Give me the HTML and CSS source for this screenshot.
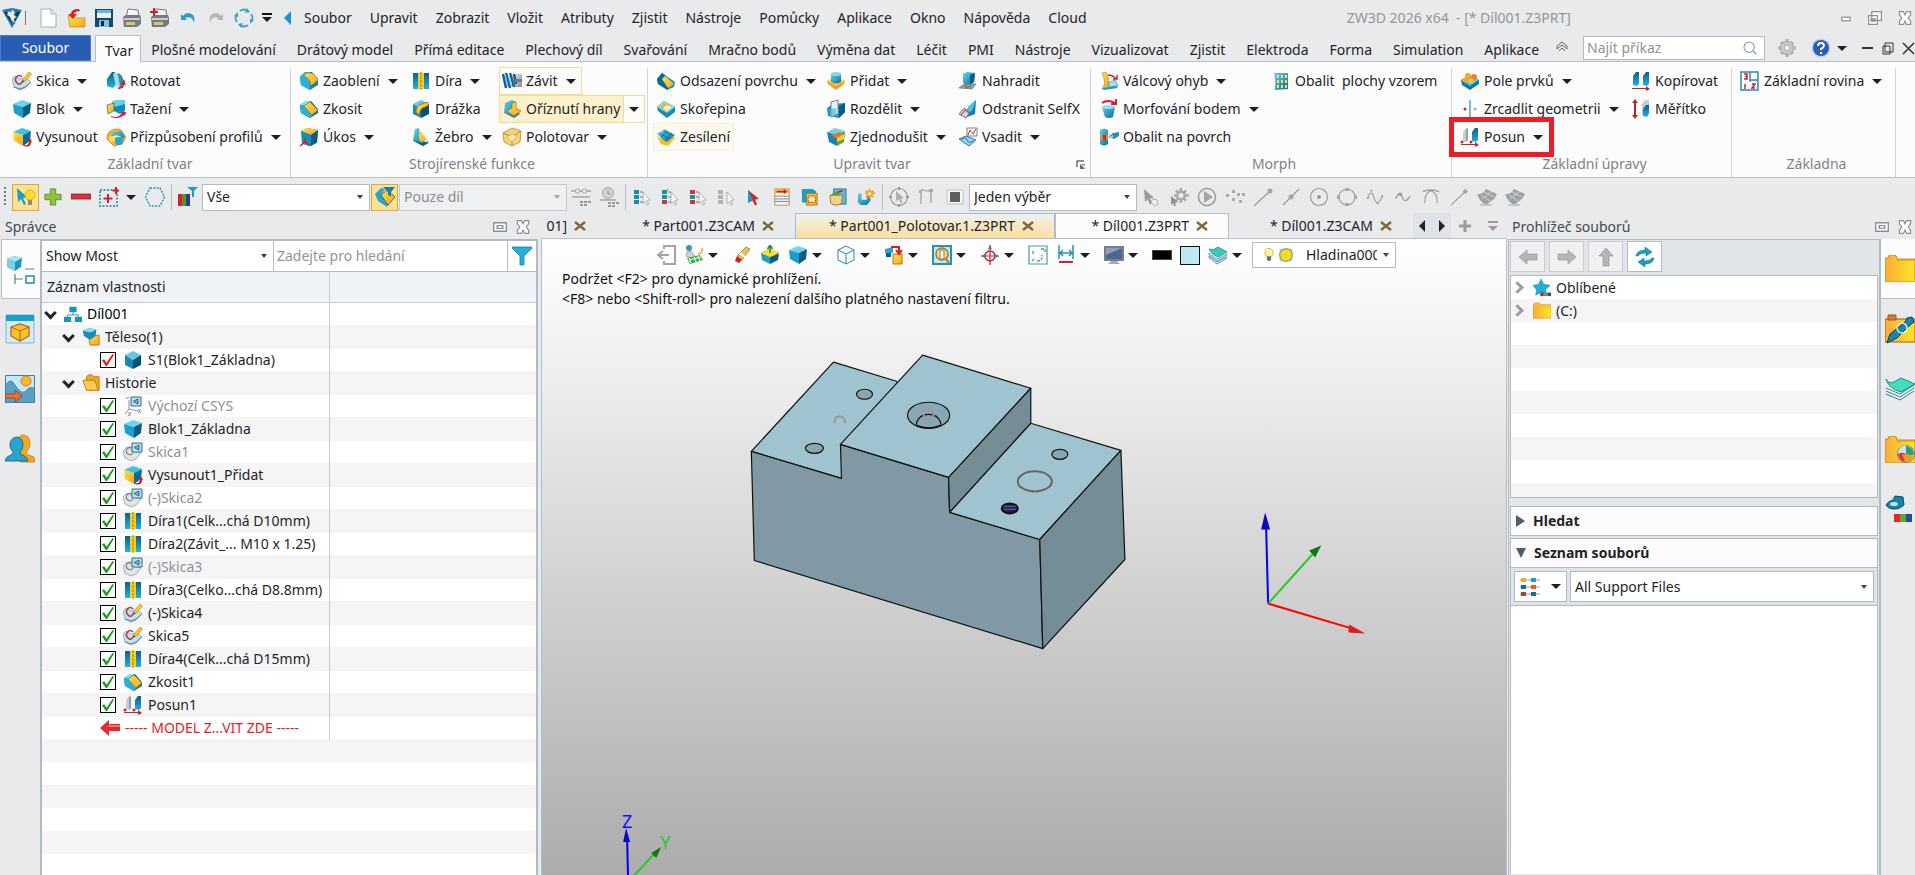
FILE: index.html
```html
<!DOCTYPE html>
<html lang="cs">
<head>
<meta charset="utf-8">
<title>ZW3D 2026 x64 - [* Díl001.Z3PRT]</title>
<link rel="stylesheet" href="styles.css">
</head>
<body>
<svg class="sprite" aria-hidden="true">
<defs>
<linearGradient id="gB" x1="0" y1="0" x2="1" y2="1"><stop offset="0" stop-color="#5fd2ee"/><stop offset="1" stop-color="#0a6f9e"/></linearGradient>
<linearGradient id="gD" x1="0" y1="0" x2="0" y2="1"><stop offset="0" stop-color="#0d5f86"/><stop offset="1" stop-color="#22b4dc"/></linearGradient>
<linearGradient id="gY" x1="0" y1="0" x2="1" y2="1"><stop offset="0" stop-color="#ffe04a"/><stop offset="1" stop-color="#f6a81c"/></linearGradient>
<linearGradient id="gG" x1="0" y1="0" x2="1" y2="1"><stop offset="0" stop-color="#e8e8e8"/><stop offset="1" stop-color="#8e8e8e"/></linearGradient>
<linearGradient id="gF" x1="0" y1="0" x2="1" y2="0"><stop offset="0" stop-color="#fcab38"/><stop offset="1" stop-color="#fde724"/></linearGradient>

<symbol id="cube" viewBox="0 0 20 20"><path d="M1 5 10 1l9 3-8 4z" fill="#6ad6f0"/><path d="M1 5l10 3v11L2 14z" fill="#1b9ecb"/><path d="M11 8l8-4-1 10-7 5z" fill="#0a5c84"/></symbol>
<symbol id="cubey" viewBox="0 0 20 20"><path d="M1 5 10 1l9 3-8 4z" fill="#3fc2e6"/><path d="M1 5l10 3v11L2 14z" fill="url(#gY)"/><path d="M11 8l8-4-1 10-7 5z" fill="#0b6c97"/></symbol>
<symbol id="cubex" viewBox="0 0 20 20"><path d="M10 1l8 4-8 5-8-5z" fill="#62c9e6"/><path d="M2 5l8 5v9l-8-4z" fill="#1789b4"/><path d="M18 5l-8 5v9l8-4z" fill="#07506f"/></symbol>
<symbol id="extrude" viewBox="0 0 20 20"><use href="#cubey"/><path d="M12 18q5 1 5-4l-2 0 3-3 2 4-1 0q0 6-7 4z" fill="#d3202a"/></symbol>
<symbol id="sketch" viewBox="0 0 20 20"><path d="M0 8l3-3 5 3 6-1 5 4-6 6-5 2-6-3z" fill="#bfe3f0" stroke="#6fa9c0" stroke-width=".8"/><path d="M2 16l6 2 5-2 6-5" fill="none" stroke="#5e7f90"/><path d="M10 6Q7 3 4.500 6T5 12t5-1" fill="none" stroke="#c8323a" stroke-width="1.600"/><path d="M10 11l1-3 6-7 2.500 2-6 7z" fill="url(#gY)" stroke="#c07a12" stroke-width=".6"/><path d="M9.500 12l1-3 2 1.500z" fill="#444"/></symbol>
<symbol id="sketchoff" viewBox="0 0 20 20"><path d="M0 9l4-4 5 3 9 3-5 6-5 2-6-3z" fill="#e2e4e5" stroke="#a9acae"/><path d="M9 6Q6 4 4 7t1 5 5-1" fill="none" stroke="#85898c" stroke-width="1.300"/><path d="M9 1h10v9H9z" fill="#bfe0ec" stroke="#2e6b88"/><path d="M16 3v5l-5-2.500z" fill="#7db4cc" stroke="#2e6b88"/></symbol>
<symbol id="csys" viewBox="0 0 20 20"><path d="M6 4v9l9 2M6 13l-4 5M3 1l1.500 2L6 1M15 13l3 4m0-4-3 4M5 17h3l-3 3h3" fill="none" stroke="#8c9094"/><path d="M8 1h10v9H8z" fill="#bfe0ec" stroke="#2e6b88"/><path d="M15 3v5l-5-2.500z" fill="#7db4cc" stroke="#2e6b88"/></symbol>
<symbol id="revolve" viewBox="0 0 20 20"><path d="M1 15V8l5-7h3l1 12-3 4z" fill="url(#gD)"/><path d="M10 4q4-4 7 5v8l-4-2-2-5z" fill="#2a8fbb" stroke="#0a4a6b" stroke-width=".6"/><path d="M7 3q3-4 5 1l2 11-4 1z" fill="#9fdcf0"/><path d="M12 17q5 1 6-6m-3 2 3-3 1 4" fill="none" stroke="#d3202a" stroke-width="1.500"/></symbol>
<symbol id="sweep" viewBox="0 0 20 20"><path d="M6 3l13-1v10l-5 3-8-4z" fill="#128bb8"/><path d="M6 3l3-2h10v4L9 8z" fill="#5fd2ee"/><path d="M1 6l7-2v8l-6 3z" fill="url(#gY)" stroke="#157" stroke-width=".6"/><path d="M5 17q7 3 11-3l-1-1 5 0-1 4-1-1q-5 5-13 2z" fill="#d3202a"/></symbol>
<symbol id="loft" viewBox="0 0 20 20"><path d="M1 12C0 4 9 0 15 3l5 7-4 7-8 2z" fill="#f5b52a" stroke="#a2670c" stroke-width=".6"/><path d="M6 5l9-1 4 6-6 4-8-1z" fill="url(#gB)"/><path d="M5 13q4-6 10-2" fill="none" stroke="#ffe98a" stroke-width="2"/><circle cx="13" cy="14" r="4" fill="#27a4cf"/><circle cx="6" cy="12" r="3" fill="#ffe04a"/></symbol>
<symbol id="fillet" viewBox="0 0 20 20"><path d="M1 6l5-5 7 0 6 7v6l-8 5-9-5z" fill="#1483ae"/><path d="M1 6l5-5 4 0 1 10v8l-9-5z" fill="#2bb0da"/><path d="M6 3q8-4 13 6l-7 6Q11 7 5 5z" fill="url(#gY)" stroke="#8a6410" stroke-width=".5"/></symbol>
<symbol id="chamfer" viewBox="0 0 20 20"><path d="M1 6l6-4 5 0 7 8v4l-8 5-9-5z" fill="#0d6f98"/><path d="M1 6l5-1 7 11-2 3-9-5z" fill="#2bb0da"/><path d="M1 6l6-4 5 0-6 4z" fill="#86ddf3"/><path d="M11 3l8 8-6 5-8-9z" fill="url(#gY)" stroke="#8a6410" stroke-width=".5"/></symbol>
<symbol id="draft" viewBox="0 0 20 20"><path d="M2 4l6-3 11 2-1 13-7 3-8-2z" fill="#168fbc"/><path d="M2 4l6-3 11 2-6 5z" fill="url(#gY)"/><path d="M12 8l7-5-1 12-6 4z" fill="#0a5c84"/><path d="M1 19l5-4 5 4M6 15v-4" fill="none" stroke="#d3202a" stroke-width="1.500"/></symbol>
<symbol id="hole" viewBox="0 0 20 20"><path d="M2 2h5v16H2zM13 2h5v16h-5z" fill="url(#gD)"/><path d="M7 2h6v16H7z" fill="#f3cf2d"/><path d="M10 1v18" stroke="#9a7a12" stroke-dasharray="3 1"/></symbol>
<symbol id="slot" viewBox="0 0 20 20"><use href="#cubex"/><path d="M5 13q0-7 6-8l5-2 2 3-4 2q-5 1-6 8z" fill="url(#gY)" stroke="#a85a10" stroke-width=".8"/></symbol>
<symbol id="rib" viewBox="0 0 20 20"><path d="M4 2l4-1 1 12 9 3-6 3-10-5z" fill="url(#gB)"/><path d="M8 2l8 11-6 2-2-3z" fill="url(#gY)"/><path d="M2 13l9 3 7-2-6 5z" fill="#0a5c84"/></symbol>
<symbol id="thread" viewBox="0 0 20 20"><path d="M10 3h10v13H10z" fill="url(#gG)"/><path d="M1 3l3 14M4 2l4 15M8 2l4 14M12 3l2 10" stroke="#155f90" stroke-width="2.500"/><path d="M3 3l3 13M7 3l3 13" stroke="#6fc2e4"/><path d="M13 8h7v3h-7z" fill="#747a80"/></symbol>
<symbol id="lip" viewBox="0 0 20 20"><path d="M3 4l7-3 4 2v9l4 3-6 4-10-5z" fill="url(#gB)"/><path d="M5 12l5-3V4l4-1v6l5 3-7 5z" fill="url(#gY)" stroke="#a85a10" stroke-width=".6"/></symbol>
<symbol id="stock" viewBox="0 0 20 20"><path d="M1 6l9-5 9 3-1 11-8 4-8-4z" fill="#f4d37a" stroke="#b98a2c" stroke-width=".8"/><path d="M1 6l9 4v9M10 10l9-6" fill="none" stroke="#b98a2c"/><path d="M5 10l5-3 5 2-5 6z" fill="#fbe9b3" stroke="#caa047" stroke-width=".6"/></symbol>
<symbol id="offset" viewBox="0 0 20 20"><path d="M1 8l5-6 13 9-1 5-7 3L2 13z" fill="#1b93bf"/><path d="M1 8l5-6 4 3-4 4 6 5v5L2 13z" fill="#0c6a94"/><path d="M6 8l3-3 9 8-6 4z" fill="url(#gY)"/></symbol>
<symbol id="shell" viewBox="0 0 20 20"><path d="M1 8l7-6 11 6v5l-8 6-9-7z" fill="#1789b4"/><path d="M1 8l7-6 11 6-8 6z" fill="#7fdaf2"/><path d="M4 8l5-4 7 4-5 4z" fill="#f5ae25"/><path d="M7 9l4-3 5 2-5 4z" fill="#fff1a8"/></symbol>
<symbol id="thicken" viewBox="0 0 20 20"><path d="M1 9l4 8 7 2 7-8-2-2-7 5z" fill="#f3c024"/><path d="M1 6q5-1 7-4l11 6-8 7q-5-2-10-9z" fill="url(#gB)"/><path d="M5 7l9 5M8 4l9 5M5 10l7-6M9 13l7-7" stroke="#0a6288" stroke-width=".7"/></symbol>
<symbol id="add" viewBox="0 0 20 20"><path d="M1 10l9-4 9 4-1 3-8 6-8-6z" fill="#ef9f1c"/><path d="M1 10l9-4 9 4-9 5z" fill="#ffd24a"/><path d="M5 3v8q5 3 10 0V3z" fill="url(#gB)"/><ellipse cx="10" cy="3" rx="5" ry="2" fill="#7fdaf2"/></symbol>
<symbol id="divide" viewBox="0 0 20 20"><path d="M1 9l6-4 12-1v9l-6 6-11-2z" fill="#1a94c0"/><path d="M13 7l6-3v9l-6 6z" fill="#0a5c84"/><path d="M5 3l7-2v14l-7 3z" fill="#e5f3f8" stroke="#5e8796"/><path d="M4 10l6-1v8l-6-1z" fill="#43b9de" opacity=".7"/></symbol>
<symbol id="simplify" viewBox="0 0 20 20"><path d="M1 5l8-4 10 3-8 4z" fill="#6ad6f0"/><path d="M1 5l10 3v11L3 15z" fill="#1b84b0"/><path d="M11 8l8-4-1 11-7 4z" fill="#6b9a3b"/><path d="M5 8l9-3 3 3-6 4z" fill="#e8722a"/><path d="M11 11l7-4v5l-7 3z" fill="#f3cf2d"/></symbol>
<symbol id="replace" viewBox="0 0 20 20"><path d="M5 3l4-2 8 1-1 9-5 3-6-2z" fill="url(#gB)"/><path d="M12 4l5-2-1 9-4 3z" fill="#0a5c84"/><path d="M1 17l5-4h12l-4 5z" fill="#6ea9c6" stroke="#3c6e86" stroke-width=".6"/><path d="M8 12v5l5-2" fill="none" stroke="#d95a18" stroke-width="1.500"/></symbol>
<symbol id="selfx" viewBox="0 0 20 20"><path d="M10 8l8-7-1 14-8 3z" fill="#0f7fae"/><path d="M10 8l8-7-4 11-6 2z" fill="#4cc6e8"/><path d="M1 15l5-6 6 4-4 6z" fill="#cfd6da" stroke="#6c7a82"/><path d="M3 16l4-5 4 3" stroke="#d3202a" fill="none"/></symbol>
<symbol id="inset" viewBox="0 0 20 20"><path d="M9 1h10v8H9z" fill="#fff" stroke="#7a8086"/><path d="M10 8l2-5 3 4 3-5" fill="none" stroke="#d3202a"/><path d="M1 12l7-3 10 4-7 6z" fill="#9cd5ea" stroke="#2f7797"/><path d="M3 13q5-4 6 0t7 1" fill="none" stroke="#2f7797"/></symbol>
<symbol id="bend" viewBox="0 0 20 20"><path d="M3 18Q8 12 3 2l4-1q5 10 1 17z" fill="url(#gY)" stroke="#b8860b" stroke-width=".6"/><path d="M3 17l14-2 2 2-14 2z" fill="#19a0cd"/><path d="M9 12l7-3 3 6-9 1z" fill="#a9dff0" stroke="#23708f" stroke-width=".6"/><path d="M9 4q5 0 8 4m1-4v4h-4" fill="none" stroke="#d3202a" stroke-width="1.500"/></symbol>
<symbol id="morph" viewBox="0 0 20 20"><path d="M3 8q6-3 13 0l-2 10q-4 2-8 0z" fill="url(#gB)"/><ellipse cx="9.500" cy="8" rx="6.500" ry="2" fill="#8be0f5"/><path d="M3 4q6-4 13 0m1-4v5h-5" fill="none" stroke="#d3202a" stroke-width="2"/></symbol>
<symbol id="wrap" viewBox="0 0 20 20"><path d="M1 3q4-3 8 0v14q-4 3-8 0z" fill="url(#gB)"/><path d="M2 8h7v5H2z" fill="#f08a1d"/><path d="M4 8h3v5H4z" fill="#d3202a"/><path d="M9 10l5-4 6-1v4l-5 3z" fill="#2c8bb0"/><path d="M9 10l5-2v3z" fill="#9ed9ec"/></symbol>
<symbol id="pattern" viewBox="0 0 20 20"><path d="M3 2h14v16l-13 1Q5 8 3 2z" fill="url(#gB)"/><path d="M7 4v13M11 4v13M15 4v13" stroke="#ffe04a" stroke-width="2" stroke-dasharray="3 2"/></symbol>
<symbol id="feat" viewBox="0 0 20 20"><path d="M1 9l8-4 10 4v4l-9 6-8-5z" fill="#0d77a3"/><path d="M1 9l8-4 10 4-9 6z" fill="#4cc6e8"/><ellipse cx="8" cy="5" rx="3" ry="3" fill="#f5a623"/><ellipse cx="14" cy="6" rx="3" ry="3" fill="#f07f1d"/><ellipse cx="5" cy="9" rx="2.500" ry="2.500" fill="#f5a623"/><ellipse cx="11" cy="10" rx="3" ry="2.500" fill="#f8c13d"/></symbol>
<symbol id="mirror" viewBox="0 0 20 20"><path d="M10 1v18" stroke="#4aa6cc" stroke-width="1.500"/><circle cx="5" cy="10" r="1.500" fill="#d3202a"/><circle cx="15" cy="10" r="1.500" fill="#8fb9cb"/></symbol>
<symbol id="move" viewBox="0 0 20 20"><path d="M3 14V5l3-4h2v12l-2 2z" fill="#c9cccf"/><path d="M6 3l2-2v12l-2 2z" fill="#9a9ea2"/><path d="M12 14V5l3-4h3v12l-2 2z" fill="url(#gD)"/><path d="M1 17h14v-2l4 3-4 2v-2H1z" fill="#c9202a"/><circle cx="2" cy="15" r="1.500" fill="#d3202a"/><circle cx="11" cy="15" r="1.500" fill="#d3202a"/></symbol>
<symbol id="copy" viewBox="0 0 20 20"><path d="M2 14V5l3-4h3v12l-2 2z" fill="url(#gD)"/><path d="M12 14V5l3-4h3v12l-2 2z" fill="url(#gD)"/><path d="M1 17h14v-2l4 3-4 2v-2H1z" fill="#c9202a"/></symbol>
<symbol id="scale" viewBox="0 0 20 20"><path d="M4 0l3 4H5v12h2l-3 4-3-4h2V4H1z" fill="#c9202a"/><path d="M11 16V5l3-4h4v13l-2 4z" fill="#c9cccf"/><path d="M12 17v-7l3-4h3v8l-2 4z" fill="url(#gD)"/></symbol>
<symbol id="plane" viewBox="0 0 20 20"><path d="M1 1h17v18H1z" fill="#fff" stroke="#2d8bb0" stroke-width="1.500"/><path d="M10 1v10M10 9h8" stroke="#2d8bb0" stroke-width="1.500"/><path d="M4 3h3v5H4m1-2.500h2M5 13v5M12 13h3l-3 4h3" fill="none" stroke="#d3202a" stroke-width="1.500"/></symbol>

<symbol id="app" viewBox="0 0 20 20"><path d="M0 2l10-2 10 2-10 18z" fill="#1b7fb4"/><path d="M2 4h4l5 13zM14 4h4l-6 11z" fill="#0c3550"/><path d="M6 3l3 1 1-3 3 3-1 3 3 2-3 2 1 5-4-4-1-3-3-2z" fill="#e8edf0" stroke="#555" stroke-width=".5"/></symbol>
<symbol id="doc" viewBox="0 0 20 20"><path d="M3 1h10l5 5v13H3z" fill="#fff" stroke="#98b2c0"/><path d="M13 1v5h5" fill="#dfe9ee" stroke="#98b2c0"/></symbol>
<symbol id="open" viewBox="0 0 20 20"><path d="M2 8h6l2 2h9v9H4z" fill="url(#gY)" stroke="#c98b14" stroke-width=".7"/><path d="M13 1Q5 1 5 6l-3 0 5 5 4-5H8q1-3 6-3z" fill="#d3202a"/></symbol>
<symbol id="save" viewBox="0 0 20 20"><path d="M1 1h18v18H1z" fill="#15496a"/><path d="M3 2h14v8H3z" fill="#e3f1f6"/><path d="M3 2h14v3H3z" fill="#6bb4d4"/><path d="M5 12h10v7H5z" fill="#7fc1dd"/><path d="M7 13h3v5H7z" fill="#0c2738"/></symbol>
<symbol id="print" viewBox="0 0 20 20"><path d="M6 1l10 1 1 7H4z" fill="#f3f3f3" stroke="#777"/><path d="M1 9l3-2h14l1 3v6l-4 3H2z" fill="#777b7f"/><path d="M2 10h16v2H2z" fill="#c9cccf"/><path d="M4 14h9v3H4z" fill="#d8c86a"/></symbol>
<symbol id="printp" viewBox="0 0 20 20"><use href="#print"/><path d="M4 0v8M0 4h8" stroke="#d3202a" stroke-width="2"/></symbol>
<symbol id="undo" viewBox="0 0 20 20"><path d="M3 6v6h6L7 10q7-3 9 5 2-10-6-10-3 0-5 3z" fill="#2b9cc4"/></symbol>
<symbol id="redo" viewBox="0 0 20 20"><path d="M17 6v6h-6l2-2q-7-3-9 5-2-10 6-10 3 0 5 3z" fill="#b2b7ba"/></symbol>
<symbol id="sync" viewBox="0 0 20 20"><path d="M6 3q4-3 8 0M17 6q3 4 0 8M14 17q-4 3-8 0M3 14q-3-4 0-8" fill="none" stroke="#36a3c7" stroke-width="1.800"/><path d="M13 0l3 4-5 1zM20 12l-4 4v-5zM7 20l-3-4 5-1zM0 8l4-4v5z" fill="#36a3c7"/></symbol>
<symbol id="winrest" viewBox="0 0 20 20"><path d="M6 2h12v11H6zM2 7h11v11H2zM5 11h5v3H5z" fill="#fff" stroke="#8a9096" stroke-width="1.500"/></symbol>
<symbol id="winclose" viewBox="0 0 20 20"><path d="M3 2h5l2 4 2-4h5v4l-3 4 3 4v4h-5l-2-4-2 4H3v-4l3-4-3-4z" fill="#fff" stroke="#8a9096" stroke-width="1.500"/></symbol>
<symbol id="winfloat" viewBox="0 0 20 20"><path d="M1 4h18v12H1z" fill="#fff" stroke="#8a9096" stroke-width="2"/><path d="M6 8h8v4H6z" fill="#fff" stroke="#8a9096" stroke-width="2"/></symbol>
<symbol id="winmin" viewBox="0 0 20 20"><path d="M4 9h12v5H4z" fill="#fff" stroke="#9ba0a5" stroke-width="2"/></symbol>
<symbol id="gear" viewBox="0 0 20 20"><path d="M10 1v18M1 10h18M4 4l12 12M16 4L4 16" stroke="#b5b8ba" stroke-width="3.500"/><circle cx="10" cy="10" r="6.500" fill="#c9cbcd" stroke="#a2a5a8"/><circle cx="10" cy="10" r="3" fill="#f2f3f4" stroke="#a2a5a8"/></symbol>
<symbol id="help" viewBox="0 0 20 20"><circle cx="10" cy="10" r="9.500" fill="#c9d0d8"/><circle cx="10" cy="10" r="8" fill="#2a5fb8"/><path d="M7 8q0-3 3-3t3 2.500q0 1.500-3 3.500v1M10 14v2" fill="none" stroke="#fff" stroke-width="2"/></symbol>
<symbol id="mag" viewBox="0 0 20 20"><circle cx="9" cy="9" r="6.500" fill="none" stroke="#8c979e" stroke-width="1.300"/><path d="M14 14l4 4" stroke="#3e9cc0" stroke-width="1.500"/></symbol>
<symbol id="launch" viewBox="0 0 10 10"><path d="M1 7V1h7" fill="none" stroke="#6a7078" stroke-width="1.500"/><path d="M4 4h5v5H4z" fill="#6a7078"/><path d="M4 4l5 5V5z" fill="#d7dadd"/></symbol>
<symbol id="xx" viewBox="0 0 12 12"><path d="M1 2l10 8M11 2L1 10" fill="none" stroke="#7d6a35" stroke-width="2.400"/></symbol>

<symbol id="arrowbulb" viewBox="0 0 20 20"><path d="M1 1l10 9-4 1 3 6-2 1-3-6-3 3z" fill="#14a0cc"/><circle cx="14" cy="8" r="5" fill="#ffdf2e" stroke="#e4a80d"/><path d="M12 13h4v5h-4z" fill="#8f8b80"/></symbol>
<symbol id="plus" viewBox="0 0 20 20"><path d="M7 1h6v6h6v6h-6v6H7v-6H1V7h6z" fill="#8cc63e" stroke="#5b8f1f"/></symbol>
<symbol id="minus" viewBox="0 0 20 20"><path d="M0 7h20v5H0z" fill="#d8333b" stroke="#8e1a20" stroke-width=".8"/></symbol>
<symbol id="selrect" viewBox="0 0 20 20"><path d="M1 3h17v16H1z" fill="none" stroke="#1b7fa6" stroke-width="1.500" stroke-dasharray="2 1.500"/><path d="M9 7v9M4.500 11.500h9M17 0v7M13.500 3.500h6.500" stroke="#d3202a" stroke-width="2"/></symbol>
<symbol id="hex" viewBox="0 0 20 20"><path d="M5 1h10l4.500 9-4.500 9H5L.500 10z" fill="none" stroke="#2b92b8" stroke-width="1.500" stroke-dasharray="2 1.300"/></symbol>
<symbol id="colorf" viewBox="0 0 20 20"><path d="M0 7h4v12H0z" fill="#d3202a"/><path d="M4 7h4v12H4z" fill="#4b9a2c"/><path d="M8 7h4v12H8z" fill="#2d3a94"/><path d="M9 0h11l-4 4v6h-2V4z" fill="#1d9cc4"/></symbol>
<symbol id="partf" viewBox="0 0 20 20"><path d="M0 7l6-6 4 1-4 6 8 9-2 3-9-6z" fill="#27a8d3"/><path d="M6 8l6-5 8 7-7 8z" fill="url(#gY)" stroke="#333" stroke-width=".7"/><path d="M8 0h12l-4 5v5l-3-2V5z" fill="#1d7fa6"/></symbol>
<symbol id="ref1" viewBox="0 0 20 20"><path d="M0 4h4M16 4h4M9 4h2M1 10h18" stroke="#a3a6a9" stroke-width="1.500"/><circle cx="6.500" cy="4" r="2.200" fill="none" stroke="#a3a6a9"/><circle cx="13.500" cy="4" r="2.200" fill="none" stroke="#a3a6a9"/><path d="M9 15h3M13 15h3M17 15h3M9 18h3M13 18h3" stroke="#96999c" stroke-width="2"/></symbol>
<symbol id="ref2" viewBox="0 0 20 20"><path d="M1 12h16v2H1z" fill="#b4b7b9"/><circle cx="9" cy="6" r="5.500" fill="#d0d2d4" stroke="#a3a6a9"/><path d="M9 3v4h3" stroke="#999" fill="none"/><path d="M9 16h3M13 16h3M17 16h3M9 19h3M13 19h3" stroke="#96999c" stroke-width="2"/></symbol>
<symbol id="pick" viewBox="0 0 20 20"><path d="M2 3h5v4H2zM2 8h5v4H2zM2 13h5v4H2z" fill="#168fae"/><path d="M8 5h3M8 10h3M8 15h3" stroke="#777"/></symbol>
<symbol id="ptr" viewBox="0 0 20 20"><path d="M11 5l7 8-3 .500 1.500 4-1.500 1-1.500-4-2.500 2z" fill="#f4f4f4" stroke="#9a9ea1" stroke-width=".7"/></symbol>
<symbol id="pk1" viewBox="0 0 20 20"><use href="#pick"/><use href="#ptr"/></symbol>
<symbol id="pk2" viewBox="0 0 20 20"><use href="#pick"/><path d="M2 13h5v4H2z" fill="#c23b40"/><path d="M3 4l2 2 3-4" fill="none" stroke="#3a9a2a"/><use href="#ptr"/></symbol>
<symbol id="pk3" viewBox="0 0 20 20"><use href="#pick"/><path d="M2 3h5v4H2zM2 13h5v4H2z" fill="#d3323a"/><use href="#ptr"/></symbol>
<symbol id="pk4" viewBox="0 0 20 20"><path d="M2 3h5v4H2zM2 8h5v4H2zM2 13h5v4H2z" fill="#b0b3b5"/><use href="#ptr"/></symbol>
<symbol id="pk5" viewBox="0 0 20 20"><path d="M4 3l11 9-4 .500 2 5-2 1-2.500-5L4 16z" fill="#d3202a"/><path d="M4 3l5 9-5 4z" fill="#199dc8"/></symbol>
<symbol id="rows" viewBox="0 0 20 20"><path d="M2 1h16v18H2z" fill="#fff" stroke="#9a8b68"/><path d="M2 1h16v5H2z" fill="#f3c33c"/><path d="M2 9h16M2 12h16M2 15h16" stroke="#9a9a9a" stroke-width="1.500"/><path d="M4 3h8V1l4 3-4 3V5H4z" fill="#d3202a"/></symbol>
<symbol id="layer1" viewBox="0 0 20 20"><path d="M1 1h12l4 3v12H1z" fill="#15a0c9"/><path d="M6 6h12v13H6z" fill="#f6bd2c" stroke="#a87810"/><path d="M8 9h8v7H8z" fill="#ffe9a0" stroke="#d3202a" stroke-dasharray="2 1"/></symbol>
<symbol id="layer2" viewBox="0 0 20 20"><path d="M5 1h14v17H5z" fill="#5bb9d8" stroke="#2b7f9d"/><path d="M1 8h14l-1 9q-6 4-12 0z" fill="#f3d28e" stroke="#a87810"/><path d="M2 8q5-7 11 0z" fill="#4da63c"/><path d="M9 5l6-2" stroke="#d3202a" stroke-width="2"/></symbol>
<symbol id="layer3" viewBox="0 0 20 20"><path d="M1 6h4v7h6V9h4v5l-4 5H4l-3-3z" fill="url(#gB)"/><path d="M14 1v11M9 6h11M10 3l8 7M18 3l-8 7" stroke="#ef9b1d" stroke-width="2"/><circle cx="14" cy="6.500" r="2" fill="#ffe9a0"/></symbol>
<symbol id="gcur" viewBox="0 0 20 20"><circle cx="10" cy="10" r="8.500" fill="none" stroke="#989b9e" stroke-width="1.200"/><path d="M10 0v3M10 17v3M0 10h3M17 10h3" stroke="#989b9e" stroke-width="2"/><path d="M7 4l8 7-3 .500 1.500 4-2 .800-1.500-4-3 2z" fill="#aeb1b4"/></symbol>
<symbol id="gcurve" viewBox="0 0 20 20"><path d="M4 17V4q0-2 2-1 6 2 8 0v13" fill="none" stroke="#989b9e" stroke-width="1.200"/><path d="M2 3h3v3H2zM12 2h4v3h-4z" fill="#aaa"/></symbol>
<symbol id="gsq" viewBox="0 0 20 20"><path d="M2 3h16v14H2z" fill="#f4f5f5" stroke="#c0c3c5"/><path d="M5 5h10v10H5z" fill="#5d6063"/></symbol>
<symbol id="garrow" viewBox="0 0 20 20"><path d="M3 2l10 9-4 .500 2 5-2 1-2.500-5L4 15z" fill="#989b9e"/><path d="M12 12l4 1 1 4-3 2-4-4z" fill="#f4f4f4" stroke="#b0b0b0"/></symbol>
<symbol id="ggear" viewBox="0 0 20 20"><path d="M12 1v15M5 8.500h15M7 3.500l10 10M17 3.500l-10 10" stroke="#a9acaf" stroke-width="2.500"/><circle cx="12" cy="8.500" r="5" fill="#a9acaf"/><circle cx="12" cy="8.500" r="2.500" fill="#e8eaec"/><path d="M2 9l7 6-3 1 1 3-2 0-1-3-2 2z" fill="#8f9295"/></symbol>
<symbol id="gplay" viewBox="0 0 20 20"><circle cx="10" cy="10" r="8.500" fill="none" stroke="#989b9e" stroke-width="1.500"/><path d="M7 4l9 6-9 6z" fill="#a3a6a9"/></symbol>
<symbol id="gdots" viewBox="0 0 20 20"><path d="M1 7h3v3H1zM7 3h3v3H7zM12 6h3v3h-3zM17 6h3v3h-3zM7 11h3v3H7zM14 13h3v3h-3z" fill="#a9acaf"/></symbol>
<symbol id="gline" viewBox="0 0 20 20"><path d="M1 19L17 4" stroke="#989b9e" stroke-width="1.200"/><circle cx="17" cy="4" r="2.500" fill="#a3a6a9"/></symbol>
<symbol id="gmid" viewBox="0 0 20 20"><path d="M2 18L18 2" stroke="#989b9e" stroke-width="1.200"/><circle cx="10" cy="10" r="2.500" fill="#a3a6a9"/></symbol>
<symbol id="gcen" viewBox="0 0 20 20"><circle cx="10" cy="10" r="8.500" fill="none" stroke="#989b9e" stroke-width="1.200"/><circle cx="10" cy="10" r="2" fill="#989b9e"/></symbol>
<symbol id="gquad" viewBox="0 0 20 20"><circle cx="10" cy="10" r="8" fill="none" stroke="#989b9e" stroke-width="1.200"/><path d="M8 1h4v3H8zM8 16h4v3H8zM0 8h3v4H0zM17 8h3v4h-3z" fill="#a9acaf"/></symbol>
<symbol id="gwave" viewBox="0 0 20 20"><path d="M2 11q4-11 7 0t9-1" fill="none" stroke="#989b9e" stroke-width="1.200"/><path d="M5 2h2v2H5zM12 16h2v2h-2zM1 10h2v2H1zM17 8h2v2h-2z" fill="#989b9e"/></symbol>
<symbol id="gwave2" viewBox="0 0 20 20"><path d="M2 12q4-11 8 0 3 5 8-3" fill="none" stroke="#989b9e" stroke-width="1.400"/><circle cx="7" cy="7" r="2" fill="#989b9e"/></symbol>
<symbol id="garc" viewBox="0 0 20 20"><path d="M1 4q9-4 18 0M3 17q0-12 7-14 7 2 7 14" fill="none" stroke="#989b9e" stroke-width="1.300"/></symbol>
<symbol id="gsurf" viewBox="0 0 20 20"><path d="M0 7q6 1 9-5l11 5-3 5-8 6q-6-3-9-11z" fill="#9ea1a4"/><path d="M4 8l9 6M7 5l10 5M5 12l9-7" stroke="#dadcdd" stroke-width=".8"/><path d="M3 18h12" stroke="#c3c6c8" stroke-width="2"/></symbol>

<symbol id="exit" viewBox="0 0 20 20"><path d="M8 4V1h11v18H8v-3M13 10H3m4-4l-5 4 5 4" fill="none" stroke="#a2a5a8" stroke-width="2"/></symbol>
<symbol id="meshsel" viewBox="0 0 20 20"><circle cx="5" cy="3" r="3" fill="#3e93b5"/><path d="M3 7l4-1 4 5-4 2-5-2z" fill="#cfd3d6" stroke="#888" stroke-width=".6"/><path d="M3 13l13-3 3 5-13 4z" fill="#35b24a"/><path d="M5 15l12-3M7 18l-2-5M12 17l-2-5M16 16l-2-5" stroke="#fff"/><path d="M14 9q5-1 4-6" stroke="#f0a41d" stroke-width="1.500" fill="none"/></symbol>
<symbol id="eraser" viewBox="0 0 20 20"><path d="M5 11l9-9 4 2-8 11z" fill="#f0c23b" stroke="#777" stroke-width=".7"/><path d="M5 11l5 4-3 3-4-2z" fill="#d3202a"/><path d="M8 8l5 4" stroke="#fff" stroke-width="2"/></symbol>
<symbol id="shade" viewBox="0 0 20 20"><path d="M1 8l9 4v7l-8-4z" fill="#1b9ecb"/><path d="M19 8l-9 4v7l8-4z" fill="#0a5c84"/><path d="M1 8l9-4 9 4-9 4z" fill="#f7e02f" stroke="#c9a112" stroke-width=".5"/><path d="M10 8V2M7.500 4L10 0l2.500 4" stroke="#2d8a2d" fill="none" stroke-width="1.500"/></symbol>
<symbol id="wire" viewBox="0 0 20 20"><path d="M2 5l8-4 8 4v10l-8 4-8-4zM2 5l8 4 8-4M10 9v10" fill="#fff" stroke="#3b94b4" stroke-width="1.100"/></symbol>
<symbol id="viewrot" viewBox="0 0 20 20"><path d="M1 4l8-2v6H1z" fill="#2aa7cf"/><path d="M9 9h9v10H9z" fill="url(#gY)" stroke="#b47a12"/><path d="M7 2h8v5m-3-2 3 4 3-4" fill="none" stroke="#d3202a" stroke-width="2"/><path d="M2 8h5v4H2z" fill="#0a5c84"/></symbol>
<symbol id="zoomfit" viewBox="0 0 20 20"><path d="M1 1h18v18H1z" fill="#bfe6f4" stroke="#2792b7" stroke-width="2"/><circle cx="10" cy="9" r="6" fill="#ffe47a" stroke="#b8780e" stroke-width="1.500"/><path d="M8 5h4v9H8z" fill="#fff" stroke="#777"/><path d="M14 14l3 4" stroke="#b8780e" stroke-width="2"/></symbol>
<symbol id="target" viewBox="0 0 20 20"><circle cx="10" cy="11" r="5" fill="none" stroke="#d3202a" stroke-width="1.500"/><path d="M10 0v20M1 11h18" stroke="#d3202a" stroke-width="1.200"/><path d="M10 0l-2 4h4zM1 11l4-2v4zM19 11l-4-2v4z" fill="#2b8db2"/></symbol>
<symbol id="viewbox" viewBox="0 0 20 20"><path d="M1 1h18v18H1z" fill="#fff" stroke="#4496b5" stroke-width="1.200"/><path d="M4 16l3-3M13 4h4v4M5 9v-2h2M9 16q6 0 5-6" fill="none" stroke="#4496b5" stroke-width="1.300" stroke-dasharray="3 1"/></symbol>
<symbol id="dimv" viewBox="0 0 20 20"><path d="M3 0v14M17 0v14M4 8h12M7 5L4 8l3 3M13 5l3 3-3 3" fill="none" stroke="#2792b7" stroke-width="1.500"/><path d="M3 17h14" stroke="#d3202a" stroke-width="2"/></symbol>
<symbol id="monitor" viewBox="0 0 20 20"><path d="M0 1h20v15H0z" fill="#7b7f84"/><path d="M2 3h16v11H2z" fill="#4d6590"/><path d="M2 3h16L2 10z" fill="#8ba0c4"/><path d="M7 16h6l3 3H4z" fill="#a8abae"/></symbol>
<symbol id="layers" viewBox="0 0 20 20"><path d="M1 11l8 6 10-5-1 2-9 5-8-6zM1 8l8 6 10-5-1 2-9 5-8-6z" fill="#d7eaf0" stroke="#3a7f97" stroke-width=".7"/><path d="M1 4q5 2 9-2l9 5-9 5Q4 10 1 4z" fill="#35cdb3" stroke="#1e8c86" stroke-width=".8"/></symbol>
<symbol id="rlayers" viewBox="0 0 30 24"><path d="M1 17l14 6 14-9M1 14l14 6 14-9M1 11l14 6 14-9" fill="#e8f4f7" stroke="#3a7f97"/><path d="M1 2q2 5 8 3l7-4 14 6-14 8Q4 12 1 2z" fill="#43dcbc" stroke="#1e8c86"/></symbol>
<symbol id="bulb" viewBox="0 0 20 20"><path d="M6 12q-4-5-1-9 5-5 10 0 3 4-1 9z" fill="#fff3a0" stroke="#c9a51a"/><path d="M7 12h6v5l-3 2-3-2z" fill="#5b6c96"/></symbol>
<symbol id="ydot" viewBox="0 0 20 20"><path d="M1 1h18v18H1z" fill="#9fd6e4"/><circle cx="10" cy="10" r="9" fill="#f5da2a" stroke="#4d8a5a" stroke-width="1.200"/></symbol>

<symbol id="mgr" viewBox="0 0 30 30"><path d="M1 5l7-3 8 2-1 9-6 4-8-4z" fill="#1d95bf"/><path d="M1 5l7-3 8 2-7 4z" fill="#a3e4f6"/><path d="M1 5l8 3v9l-8-4z" fill="#7fcbe2"/><path d="M19 15h9M9 20v10M9 25h8" stroke="#6d7b86" stroke-width="1.200"/><path d="M20 22h8v7h-8z" fill="#fff" stroke="#2d87a9" stroke-width="1.500"/></symbol>
<symbol id="assy" viewBox="0 0 30 30"><path d="M1 1h28v28H1z" fill="#cdeef8" stroke="#8db5c3"/><path d="M1 1h28v6H1z" fill="#1a9fc8"/><path d="M6 13l9-3 9 3v9l-9 5-9-5z" fill="#f8c728" stroke="#c8541a" stroke-width="1.200"/><path d="M6 13l9 4 9-4M15 17v10" stroke="#c8541a" fill="none"/></symbol>
<symbol id="view" viewBox="0 0 30 30"><path d="M0 1h30v28H0z" fill="#c4e8f5"/><path d="M0 10Q6 0 12 12q6 9 10 2 5-4 8 0v15H0z" fill="#3488b2" opacity=".75"/><path d="M0 10Q6 0 12 12q6 9 10 2 5-4 8 0" stroke="#fff" fill="none"/><path d="M.500 1.500h29v27H.500z" fill="none" stroke="#3f7f9f"/><circle cx="21" cy="7" r="5" fill="#ffb52b" stroke="#d6801a"/><path d="M0 20h10v-4l7 6-7 6v-4H0z" fill="#f0702a" stroke="#8d3210" stroke-width=".7"/></symbol>
<symbol id="role" viewBox="0 0 30 30"><path d="M12 6q2-5 7-5 6 1 6 8 0 5-3 8l-1 3 8 3 1 5H15z" fill="#f7a71e" stroke="#c87612" stroke-width=".7"/><path d="M0 27q0-4 8-7l0-2Q4 14 5 9q2-6 7-6 6 1 6 7t-3 8v2q7 2 8 7z" fill="#27a5cf" stroke="#155e7c" stroke-width=".8"/></symbol>
<symbol id="tree" viewBox="0 0 20 20"><path d="M6 2h8v6H6zM0 13h8v6H0zM12 13h8v6h-8z" fill="#1b93bb"/><path d="M10 8v3M4 13v-2h12v2" fill="none" stroke="#4c7a8c"/></symbol>
<symbol id="bodyf" viewBox="0 0 20 20"><path d="M7 8h12v11H9z" fill="url(#gY)" stroke="#b77815"/><path d="M1 3l7-3 8 2-1 7-6 4-7-4z" fill="#1a8cb6"/><path d="M1 3l7-3 8 2-7 3z" fill="#8bdcf2"/></symbol>
<symbol id="hist" viewBox="0 0 20 20"><path d="M5 3l2-2h4l2 2h6v15H5z" fill="#f4a622" stroke="#b77815"/><path d="M1 7h13l4 11H5z" fill="#ffcf4b" stroke="#b77815"/></symbol>
<symbol id="redarrow" viewBox="0 0 20 20"><path d="M0 10l9-8v4h11v7H9v5z" fill="#ec2531"/><path d="M9 7h11v2H7z" fill="#f77"/></symbol>
<symbol id="funnel" viewBox="0 0 20 20"><path d="M0 1h20v1l-8 8v9H8v-9L0 2z" fill="#20b1da" stroke="#1283a8" stroke-width=".8"/></symbol>
<symbol id="star" viewBox="0 0 20 20"><path d="M9 0l3 6 7 1-5 5 1 6-6-3-6 3 1-6-4-5 6-1z" fill="#20b1da" stroke="#1283a8" stroke-width=".6"/><path d="M8 15h4v4H8z" fill="#d3202a"/><path d="M12 15h4v4h-4z" fill="#5aa532"/><path d="M16 15h4v4h-4z" fill="#2d4a9a"/></symbol>
<symbol id="folder" viewBox="0 0 20 20"><path d="M0 3l2-2h5l1 2h12v15H0z" fill="url(#gF)" stroke="#d8941e" stroke-width=".7"/><path d="M0 5h20" stroke="#f3b93a"/></symbol>
<symbol id="nleft" viewBox="0 0 20 20"><path d="M1 10l8-7v4h10v6H9v4z" fill="#b3b5b7" stroke="#8f9295" stroke-width=".6"/></symbol>
<symbol id="refresh" viewBox="0 0 20 20"><path d="M1 9Q2 3 10 3V0l7 5-6 4V6Q5 6 3 9zM19 11q-1 6-9 6v3l-7-5 6-4v3q6 0 8-3z" fill="#1c9cc6" stroke="#0f6688" stroke-width=".5"/></symbol>
<symbol id="rfolder" viewBox="0 0 30 27"><path d="M0 3h3q0-3 3-3h3q3 0 3 4h18v23H0z" fill="url(#gF)" stroke="#c98a2a"/><path d="M12 5h18" stroke="#c98a2a"/></symbol>
<symbol id="rlib" viewBox="0 0 30 30"><path d="M0 5h30v23H0z" fill="url(#gF)" stroke="#a5561c"/><path d="M3 1h8v5H3z" fill="#c9803e" stroke="#a5561c"/><path d="M2 29L5 20 20 8l2-4 5-1 2 5-5 4L12 24z" fill="#1885ad" stroke="#073f58"/><circle cx="17" cy="14" r="5" fill="none" stroke="#d8f2fa" stroke-width="1.500"/></symbol>
<symbol id="rballs" viewBox="0 0 30 27"><use href="#rfolder"/><circle cx="21" cy="18" r="8.500" fill="#e4f3f8" stroke="#777"/><path d="M13 18q4-3 8 0v8q-7-1-8-8z" fill="#d83a2a"/><path d="M17 18q6 2 12-1-1 9-9 9z" fill="#f59a1c"/><path d="M21 10v8q4 2 8 0-1-7-8-8z" fill="#2c9f7a"/><path d="M13 17q1-7 8-8v8q-4-2-8 0z" fill="#bfe6f4"/></symbol>
<symbol id="rmat" viewBox="0 0 30 30"><path d="M1 11q2-4 7-5l2-4 8 1 1 8q-5 5-11 4-6-1-7-4z" fill="#1783ab" stroke="#0a4f6c"/><ellipse cx="9" cy="10" rx="4" ry="2" fill="#b9e4f2"/><path d="M9 20h6v8H9z" fill="#e5262c"/><path d="M15 20h6v8h-6z" fill="#5fa92e"/><path d="M21 20h6v8h-6z" fill="#274c9c"/></symbol>
<symbol id="listv" viewBox="0 0 20 20"><path d="M0 3h20M0 10h20M0 17h20" stroke="#999"/><path d="M1 1h5v4H1z" fill="#f3a826"/><path d="M11 1h5v4h-5z" fill="#2499c0"/><path d="M1 8h5v4H1z" fill="#176f93"/><path d="M11 8h5v4h-5z" fill="#d9622a"/><path d="M1 15h5v4H1z" fill="#a9414a"/><path d="M11 15h5v4h-5z" fill="#1a6c93"/></symbol>
</defs>
</svg>

<header class="titlebar">
  <div class="quick">
    <svg class="ic app"><use href="#app"/></svg>
    <span class="vbar"></span>
    <button aria-label="Nový"><svg class="ic"><use href="#doc"/></svg></button>
    <button aria-label="Otevřít"><svg class="ic"><use href="#open"/></svg></button>
    <button aria-label="Uložit"><svg class="ic"><use href="#save"/></svg></button>
    <button aria-label="Tisk"><svg class="ic"><use href="#print"/></svg></button>
    <button aria-label="Rychlý tisk"><svg class="ic"><use href="#printp"/></svg></button>
    <button aria-label="Zpět"><svg class="ic"><use href="#undo"/></svg></button>
    <button aria-label="Vpřed"><svg class="ic"><use href="#redo"/></svg></button>
    <button aria-label="Regenerovat"><svg class="ic"><use href="#sync"/></svg></button>
    <button class="more" aria-label="Přizpůsobit"></button>
    <button class="collapse" aria-label="Sbalit nabídku"></button>
  </div>
  <nav class="menu">
    <button>Soubor</button><button>Upravit</button><button>Zobrazit</button><button>Vložit</button><button>Atributy</button><button>Zjistit</button><button>Nástroje</button><button>Pomůcky</button><button>Aplikace</button><button>Okno</button><button>Nápověda</button><button>Cloud</button>
  </nav>
  <h1 class="caption">ZW3D 2026 x64 &nbsp;- [* Díl001.Z3PRT]</h1>
  <div class="winbtns">
    <button aria-label="Minimalizovat"><svg class="ic s14"><use href="#winmin"/></svg></button>
    <button aria-label="Obnovit"><svg class="ic s16"><use href="#winrest"/></svg></button>
    <button aria-label="Zavřít"><svg class="ic s16"><use href="#winclose"/></svg></button>
  </div>
</header>

<nav class="tabs">
  <button class="file">Soubor</button>
  <button class="tab on">Tvar</button>
  <button class="tab">Plošné modelování</button><button class="tab">Drátový model</button><button class="tab">Přímá editace</button><button class="tab">Plechový díl</button><button class="tab">Svařování</button><button class="tab">Mračno bodů</button><button class="tab">Výměna dat</button><button class="tab">Léčit</button><button class="tab">PMI</button><button class="tab">Nástroje</button><button class="tab">Vizualizovat</button><button class="tab">Zjistit</button><button class="tab">Elektroda</button><button class="tab">Forma</button><button class="tab">Simulation</button><button class="tab">Aplikace</button>
  <button class="fold" aria-label="Sbalit pás karet"><svg width="12" height="12"><path d="M1 6l5-4 5 4v3L6 5 1 9zM3 11l3-3 3 3" fill="none" stroke="#5d646b"/></svg></button>
  <div class="tabtools">
    <label class="find"><input type="text" placeholder="Najít příkaz" aria-label="Najít příkaz"><svg class="ic s16"><use href="#mag"/></svg></label>
    <button aria-label="Nastavení"><svg class="ic"><use href="#gear"/></svg></button>
    <button class="helpb" aria-label="Nápověda"><svg class="ic"><use href="#help"/></svg><i class="dn"></i></button>
    <button aria-label="Minimalizovat okno"><svg width="14" height="14"><path d="M1 7h11" stroke="#333" stroke-width="2"/></svg></button>
    <button aria-label="Obnovit okno"><svg width="14" height="14"><path d="M4 2h8v9H4zM2 5h7v8H2z" fill="#e8eaec" stroke="#333"/></svg></button>
    <button aria-label="Zavřít okno"><svg width="14" height="14"><path d="M2 2l11 11M13 2L2 13" stroke="#333" stroke-width="1.500"/></svg></button>
  </div>
</nav>

<section class="ribbon">
  <div class="group g1"><div class="cols">
    <div class="col">
      <div class="cmd"><button><svg class="ic"><use href="#sketch"/></svg>Skica</button><button class="dd" aria-label="Další"></button></div>
      <div class="cmd"><button><svg class="ic"><use href="#cube"/></svg>Blok</button><button class="dd" aria-label="Další"></button></div>
      <div class="cmd"><button><svg class="ic"><use href="#extrude"/></svg>Vysunout</button></div>
    </div>
    <div class="col">
      <div class="cmd"><button><svg class="ic"><use href="#revolve"/></svg>Rotovat</button></div>
      <div class="cmd"><button><svg class="ic"><use href="#sweep"/></svg>Tažení</button><button class="dd" aria-label="Další"></button></div>
      <div class="cmd"><button><svg class="ic"><use href="#loft"/></svg>Přizpůsobení profilů</button><button class="dd" aria-label="Další"></button></div>
    </div></div><h2>Základní tvar</h2>
  </div>
  <div class="group g2"><div class="cols">
    <div class="col">
      <div class="cmd"><button><svg class="ic"><use href="#fillet"/></svg>Zaoblení</button><button class="dd" aria-label="Další"></button></div>
      <div class="cmd"><button><svg class="ic"><use href="#chamfer"/></svg>Zkosit</button></div>
      <div class="cmd"><button><svg class="ic"><use href="#draft"/></svg>Úkos</button><button class="dd" aria-label="Další"></button></div>
    </div>
    <div class="col">
      <div class="cmd"><button><svg class="ic"><use href="#hole"/></svg>Díra</button><button class="dd" aria-label="Další"></button></div>
      <div class="cmd"><button><svg class="ic"><use href="#slot"/></svg>Drážka</button></div>
      <div class="cmd"><button><svg class="ic"><use href="#rib"/></svg>Žebro</button><button class="dd" aria-label="Další"></button></div>
    </div>
    <div class="col">
      <div class="cmd framed"><button><svg class="ic"><use href="#thread"/></svg>Závit</button><button class="dd" aria-label="Další"></button></div>
      <div class="cmd framed hot"><button><svg class="ic"><use href="#lip"/></svg>Oříznutí hrany</button><button class="dd" aria-label="Další"></button></div>
      <div class="cmd"><button><svg class="ic"><use href="#stock"/></svg>Polotovar</button><button class="dd" aria-label="Další"></button></div>
    </div></div><h2>Strojírenské funkce</h2>
  </div>
  <div class="group g3"><div class="cols">
    <div class="col">
      <div class="cmd"><button><svg class="ic"><use href="#offset"/></svg>Odsazení povrchu</button><button class="dd" aria-label="Další"></button></div>
      <div class="cmd"><button><svg class="ic"><use href="#shell"/></svg>Skořepina</button></div>
      <div class="cmd soft"><button><svg class="ic"><use href="#thicken"/></svg>Zesílení</button></div>
    </div>
    <div class="col">
      <div class="cmd"><button><svg class="ic"><use href="#add"/></svg>Přidat</button><button class="dd" aria-label="Další"></button></div>
      <div class="cmd"><button><svg class="ic"><use href="#divide"/></svg>Rozdělit</button><button class="dd" aria-label="Další"></button></div>
      <div class="cmd"><button><svg class="ic"><use href="#simplify"/></svg>Zjednodušit</button><button class="dd" aria-label="Další"></button></div>
    </div>
    <div class="col">
      <div class="cmd"><button><svg class="ic"><use href="#replace"/></svg>Nahradit</button></div>
      <div class="cmd"><button><svg class="ic"><use href="#selfx"/></svg>Odstranit SelfX</button></div>
      <div class="cmd"><button><svg class="ic"><use href="#inset"/></svg>Vsadit</button><button class="dd" aria-label="Další"></button></div>
    </div></div><h2>Upravit tvar</h2><button class="launcher" aria-label="Nastavení skupiny"><svg width="10" height="10"><use href="#launch"/></svg></button>
  </div>
  <div class="group g4"><div class="cols">
    <div class="col">
      <div class="cmd"><button><svg class="ic"><use href="#bend"/></svg>Válcový ohyb</button><button class="dd" aria-label="Další"></button></div>
      <div class="cmd"><button><svg class="ic"><use href="#morph"/></svg>Morfování bodem</button><button class="dd" aria-label="Další"></button></div>
      <div class="cmd"><button><svg class="ic"><use href="#wrap"/></svg>Obalit na povrch</button></div>
    </div>
    <div class="col">
      <div class="cmd"><button><svg class="ic"><use href="#pattern"/></svg>Obalit &nbsp;plochy vzorem</button></div>
    </div></div><h2>Morph</h2>
  </div>
  <div class="group g5"><div class="cols">
    <div class="col">
      <div class="cmd"><button><svg class="ic"><use href="#feat"/></svg>Pole prvků</button><button class="dd" aria-label="Další"></button></div>
      <div class="cmd"><button><svg class="ic"><use href="#mirror"/></svg>Zrcadlit geometrii</button><button class="dd" aria-label="Další"></button></div>
      <div class="cmd marked"><button><svg class="ic"><use href="#move"/></svg>Posun</button><button class="dd" aria-label="Další"></button></div>
    </div>
    <div class="col">
      <div class="cmd"><button><svg class="ic"><use href="#copy"/></svg>Kopírovat</button></div>
      <div class="cmd"><button><svg class="ic"><use href="#scale"/></svg>Měřítko</button></div>
    </div></div><h2>Základní úpravy</h2>
  </div>
  <div class="group g6"><div class="cols">
    <div class="col">
      <div class="cmd"><button><svg class="ic"><use href="#plane"/></svg>Základní rovina</button><button class="dd" aria-label="Další"></button></div>
    </div></div><h2>Základna</h2>
  </div>
</section>

<section class="toolbar">
  <span class="grip"></span>
  <button class="tb lit" aria-label="Výběr"><svg class="ic"><use href="#arrowbulb"/></svg></button>
  <button class="tb" aria-label="Přidat"><svg class="ic s18"><use href="#plus"/></svg></button>
  <button class="tb" aria-label="Odebrat"><svg class="ic"><use href="#minus"/></svg></button>
  <button class="tb" aria-label="Výběr oknem"><svg class="ic"><use href="#selrect"/></svg></button>
  <button class="tbdd" aria-label="Další"></button>
  <button class="tb" aria-label="Výběr polygonem"><svg class="ic"><use href="#hex"/></svg></button>
  <span class="sep"></span>
  <button class="tb" aria-label="Filtr barev"><svg class="ic"><use href="#colorf"/></svg></button>
  <span class="sel"><select aria-label="Filtr"><option>Vše</option></select></span>
  <button class="tb lit" aria-label="Filtr dílu"><svg class="ic"><use href="#partf"/></svg></button>
  <span class="sel off"><select disabled aria-label="Rozsah"><option>Pouze díl</option></select></span>
  <button class="tb" aria-label="Reference"><svg class="ic"><use href="#ref1"/></svg></button>
  <button class="tb" aria-label="Reference 2"><svg class="ic"><use href="#ref2"/></svg></button>
  <span class="sep"></span>
  <button class="tb" aria-label="Vybrat 1"><svg class="ic"><use href="#pk1"/></svg></button>
  <button class="tb" aria-label="Vybrat 2"><svg class="ic"><use href="#pk2"/></svg></button>
  <button class="tb" aria-label="Vybrat 3"><svg class="ic"><use href="#pk3"/></svg></button>
  <button class="tb" aria-label="Vybrat 4"><svg class="ic"><use href="#pk4"/></svg></button>
  <button class="tb" aria-label="Vybrat 5"><svg class="ic"><use href="#pk5"/></svg></button>
  <button class="tb" aria-label="Seznam"><svg class="ic s18"><use href="#rows"/></svg></button>
  <button class="tb" aria-label="Plocha"><svg class="ic s18"><use href="#layer1"/></svg></button>
  <button class="tb" aria-label="Těleso"><svg class="ic s18"><use href="#layer2"/></svg></button>
  <button class="tb" aria-label="Prvek"><svg class="ic s18"><use href="#layer3"/></svg></button>
  <span class="sep"></span>
  <button class="tb" aria-label="Kurzor"><svg class="ic"><use href="#gcur"/></svg></button>
  <button class="tb" aria-label="Řetěz"><svg class="ic"><use href="#gcurve"/></svg></button>
  <button class="tb" aria-label="Oblast"><svg class="ic"><use href="#gsq"/></svg></button>
  <span class="sel"><select aria-label="Režim výběru"><option>Jeden výběr</option></select></span>
  <button class="tb" aria-label="Ukázat"><svg class="ic"><use href="#garrow"/></svg></button>
  <button class="tb" aria-label="Nastavení"><svg class="ic"><use href="#ggear"/></svg></button>
  <button class="tb" aria-label="Spustit"><svg class="ic"><use href="#gplay"/></svg></button>
  <button class="tb" aria-label="Body"><svg class="ic"><use href="#gdots"/></svg></button>
  <button class="tb" aria-label="Konec"><svg class="ic"><use href="#gline"/></svg></button>
  <button class="tb" aria-label="Střed úsečky"><svg class="ic"><use href="#gmid"/></svg></button>
  <button class="tb" aria-label="Střed"><svg class="ic"><use href="#gcen"/></svg></button>
  <button class="tb" aria-label="Kvadrant"><svg class="ic"><use href="#gquad"/></svg></button>
  <button class="tb" aria-label="Spline"><svg class="ic s18"><use href="#gwave"/></svg></button>
  <button class="tb" aria-label="Křivka"><svg class="ic s18"><use href="#gwave2"/></svg></button>
  <button class="tb" aria-label="Tečna"><svg class="ic s18"><use href="#garc"/></svg></button>
  <button class="tb" aria-label="Na křivce"><svg class="ic s18"><use href="#gline"/></svg></button>
  <button class="tb" aria-label="Plocha 1"><svg class="ic"><use href="#gsurf"/></svg></button>
  <button class="tb" aria-label="Plocha 2"><svg class="ic"><use href="#gsurf"/></svg></button>
</section>

<main class="work">
  <aside class="left">
    <div class="ptitle"><h2>Správce</h2><button aria-label="Plovoucí"><svg class="ic s14"><use href="#winfloat"/></svg></button><button aria-label="Zavřít"><svg class="ic s16"><use href="#winclose"/></svg></button></div>
    <div class="lbody">
      <nav class="side">
        <button class="on" aria-label="Historie"><svg class="ic s30"><use href="#mgr"/></svg></button>
        <button aria-label="Sestava"><svg class="ic s30"><use href="#assy"/></svg></button>
        <button aria-label="Pohledy"><svg class="ic s30"><use href="#view"/></svg></button>
        <button aria-label="Role"><svg class="ic s30"><use href="#role"/></svg></button>
      </nav>
      <div class="mgr">
        <div class="filter">
          <span class="sel"><select aria-label="Zobrazení"><option>Show Most</option></select></span>
          <input type="text" placeholder="Zadejte pro hledání" aria-label="Hledání">
          <button aria-label="Filtr"><svg class="ic"><use href="#funnel"/></svg></button>
        </div>
        <div class="stripes">
        <table class="tree">
          <thead><tr><th>Záznam vlastnosti</th><th></th></tr></thead>
          <tbody>
          <tr><td><div class="n l0"><i class="chev"></i><svg class="ic s18"><use href="#tree"/></svg><b>Díl001</b></div></td><td></td></tr>
          <tr><td><div class="n l1"><i class="chev"></i><svg class="ic s18"><use href="#bodyf"/></svg>Těleso(1)</div></td><td></td></tr>
          <tr><td><label class="n l2"><input type="checkbox" class="red" checked><svg class="ic"><use href="#cubex"/></svg>S1(Blok1_Základna)</label></td><td></td></tr>
          <tr><td><div class="n l1"><i class="chev"></i><svg class="ic s18"><use href="#hist"/></svg>Historie</div></td><td></td></tr>
          <tr><td><label class="n l2 dim"><input type="checkbox" checked><svg class="ic"><use href="#csys"/></svg>Výchozí CSYS</label></td><td></td></tr>
          <tr><td><label class="n l2"><input type="checkbox" checked><svg class="ic"><use href="#cube"/></svg>Blok1_Základna</label></td><td></td></tr>
          <tr><td><label class="n l2 dim"><input type="checkbox" checked><svg class="ic"><use href="#sketchoff"/></svg>Skica1</label></td><td></td></tr>
          <tr><td><label class="n l2"><input type="checkbox" checked><svg class="ic"><use href="#extrude"/></svg>Vysunout1_Přidat</label></td><td></td></tr>
          <tr><td><label class="n l2 dim"><input type="checkbox" checked><svg class="ic"><use href="#sketchoff"/></svg>(-)Skica2</label></td><td></td></tr>
          <tr><td><label class="n l2"><input type="checkbox" checked><svg class="ic"><use href="#hole"/></svg>Díra1(Celk...chá D10mm)</label></td><td></td></tr>
          <tr><td><label class="n l2"><input type="checkbox" checked><svg class="ic"><use href="#hole"/></svg>Díra2(Závit_... M10 x 1.25)</label></td><td></td></tr>
          <tr><td><label class="n l2 dim"><input type="checkbox" checked><svg class="ic"><use href="#sketchoff"/></svg>(-)Skica3</label></td><td></td></tr>
          <tr><td><label class="n l2"><input type="checkbox" checked><svg class="ic"><use href="#hole"/></svg>Díra3(Celko...chá D8.8mm)</label></td><td></td></tr>
          <tr><td><label class="n l2"><input type="checkbox" checked><svg class="ic"><use href="#sketch"/></svg>(-)Skica4</label></td><td></td></tr>
          <tr><td><label class="n l2"><input type="checkbox" checked><svg class="ic"><use href="#sketch"/></svg>Skica5</label></td><td></td></tr>
          <tr><td><label class="n l2"><input type="checkbox" checked><svg class="ic"><use href="#hole"/></svg>Díra4(Celk...chá D15mm)</label></td><td></td></tr>
          <tr><td><label class="n l2"><input type="checkbox" checked><svg class="ic"><use href="#chamfer"/></svg>Zkosit1</label></td><td></td></tr>
          <tr><td><label class="n l2"><input type="checkbox" checked><svg class="ic"><use href="#move"/></svg>Posun1</label></td><td></td></tr>
          <tr><td><div class="n l2 stop"><svg class="ic"><use href="#redarrow"/></svg>----- MODEL Z...VIT ZDE -----</div></td><td></td></tr>
          </tbody>
        </table>
        </div>
      </div>
    </div>
  </aside>

  <section class="center">
    <nav class="docs">
      <div class="doc d0"><button>01]</button><button class="x" aria-label="Zavřít"><svg width="12" height="12"><use href="#xx"/></svg></button></div>
      <div class="doc d1"><button>* Part001.Z3CAM</button><button class="x" aria-label="Zavřít"><svg width="12" height="12"><use href="#xx"/></svg></button></div>
      <div class="doc d2 hover"><button>* Part001_Polotovar.1.Z3PRT</button><button class="x" aria-label="Zavřít"><svg width="12" height="12"><use href="#xx"/></svg></button></div>
      <div class="doc d3 on"><button>* Díl001.Z3PRT</button><button class="x" aria-label="Zavřít"><svg width="12" height="12"><use href="#xx"/></svg></button></div>
      <div class="doc d4"><button>* Díl001.Z3CAM</button><button class="x" aria-label="Zavřít"><svg width="12" height="12"><use href="#xx"/></svg></button></div>
      <div class="arrows"><button aria-label="Předchozí"><svg width="8" height="12"><path d="M7 0v12L1 6z" fill="#222"/></svg></button><button aria-label="Další"><svg width="8" height="12"><path d="M1 0v12l6-6z" fill="#222"/></svg></button></div>
      <button class="extra" aria-label="Nový dokument"><svg width="14" height="14"><path d="M7 1v12M1 7h12" stroke="#a39a97" stroke-width="3"/></svg></button>
      <button class="extra" aria-label="Seznam dokumentů"><svg width="12" height="12"><path d="M1 2h10" stroke="#a39a97" stroke-width="2"/><path d="M1 6h10l-5 5z" fill="#a39a97"/></svg></button>
    </nav>
    <div class="canvas">
      <svg class="scene" viewBox="543 239 965 635" preserveAspectRatio="xMinYMin slice">
        <g stroke="#111" stroke-width="1.200" stroke-linejoin="round">
          <path d="M752 451L834 362l63 19 24 40-79 57z" fill="#a0c3d0"/>
          <path d="M752 451l90 27-1-34 108 33 1 35 90 27 3 109-288-88z" fill="#8199a5"/>
          <path d="M841 444l82-89 108 33-82 89z" fill="#a0c3d0"/>
          <path d="M949 477l82-89v35l-81 89z" fill="#758d97"/>
          <path d="M950 512l81-89 90 27-81 89z" fill="#a0c3d0"/>
          <path d="M1040 539l81-89 4 109-82 89z" fill="#758d97"/>
          <g fill="#86a7b3"><ellipse cx="865" cy="394" rx="8" ry="5"/><ellipse cx="815" cy="448" rx="9" ry="5"/><ellipse cx="1060" cy="454" rx="8" ry="5"/><ellipse cx="929" cy="415" rx="21" ry="13"/><path d="M917 425v-3q3-8 12-8t12 8v3q-12 5-24 0z"/></g>
          <ellipse cx="1010" cy="508" rx="8" ry="5" fill="#20234d" stroke-width="2"/>
          <path d="M1004 506h12M1004 509h12" stroke="#5656a8"/>
        </g>
        <g fill="none" stroke="#9a9a9a" stroke-width="2"><path d="M835 423q0-7 5-7t6 7"/><circle cx="929" cy="414" r="5"/><ellipse cx="1035" cy="481" rx="17" ry="10" stroke="#686868"/></g>
        <g stroke-width="2"><path d="M1268 603L1266 528" stroke="#0000f5"/><path d="M1265 512l5 17h-9z" fill="#0a0ac0"/><path d="M1268 603l45-50" stroke="#28c828"/><path d="M1321 545l-12 5 6 7z" fill="#117811"/><path d="M1268 603l84 25" stroke="#f00"/><path d="M1365 633l-16-9-1 8z" fill="#d82020"/></g>
        <g stroke-width="2"><path d="M629 880l-1-42" stroke="#0000f5"/><path d="M627 827l4 14h-7z" fill="#0a0ac0"/><path d="M630 880l25-27" stroke="#28c828"/><path d="M662 846l-10 6 5 5z" fill="#117811"/></g>
        <text class="axis" x="623" y="827" fill="#1010ff">Z</text><text class="axis" x="661" y="848" fill="#28c828">Y</text>
      </svg>
      <div class="overlay">
        <div class="vtools">
          <button class="tb" aria-label="Konec"><svg class="ic"><use href="#exit"/></svg></button>
          <button class="tb" aria-label="Zobrazení prvků"><svg class="ic"><use href="#meshsel"/></svg></button><button class="vdd" aria-label="Další"></button>
          <button class="tb" aria-label="Guma"><svg class="ic"><use href="#eraser"/></svg></button>
          <button class="tb" aria-label="Rovina"><svg class="ic"><use href="#shade"/></svg></button>
          <button class="tb" aria-label="Stínování"><svg class="ic"><use href="#cube"/></svg></button><button class="vdd" aria-label="Další"></button>
          <button class="tb" aria-label="Drátový"><svg class="ic"><use href="#wire"/></svg></button><button class="vdd" aria-label="Další"></button>
          <button class="tb" aria-label="Natočení"><svg class="ic"><use href="#viewrot"/></svg></button><button class="vdd" aria-label="Další"></button>
          <button class="tb" aria-label="Lupa"><svg class="ic"><use href="#zoomfit"/></svg></button><button class="vdd" aria-label="Další"></button>
          <button class="tb" aria-label="Střed"><svg class="ic"><use href="#target"/></svg></button><button class="vdd" aria-label="Další"></button>
          <button class="tb" aria-label="Okno"><svg class="ic"><use href="#viewbox"/></svg></button>
          <button class="tb" aria-label="Kóty"><svg class="ic"><use href="#dimv"/></svg></button><button class="vdd" aria-label="Další"></button>
          <button class="tb" aria-label="Pozadí"><svg class="ic"><use href="#monitor"/></svg></button><button class="vdd" aria-label="Další"></button>
          <button class="tb" aria-label="Barva hran"><i class="sw black"></i></button>
          <button class="tb" aria-label="Barva ploch"><i class="sw blue"></i></button>
          <button class="tb" aria-label="Hladiny"><svg class="ic"><use href="#layers"/></svg></button><button class="vdd" aria-label="Další"></button>
          <span class="layer"><svg class="ic s14"><use href="#bulb"/></svg><svg class="ic s14"><use href="#ydot"/></svg><span class="sel"><select aria-label="Hladina"><option>Hladina0000</option></select></span></span>
        </div>
        <p>Podržet &lt;F2&gt; pro dynamické prohlížení.<br>&lt;F8&gt; nebo &lt;Shift-roll&gt; pro nalezení dalšího platného nastavení filtru.</p>
      </div>
    </div>
  </section>

  <aside class="right">
    <div class="ptitle"><h2>Prohlížeč souborů</h2><button aria-label="Plovoucí"><svg class="ic s14"><use href="#winfloat"/></svg></button><button aria-label="Zavřít"><svg class="ic s16"><use href="#winclose"/></svg></button></div>
    <div class="rbody">
      <div class="browser">
        <div class="navb">
          <button disabled aria-label="Zpět"><svg class="ic"><use href="#nleft"/></svg></button>
          <button disabled aria-label="Vpřed"><svg class="ic flip"><use href="#nleft"/></svg></button>
          <button disabled aria-label="Nahoru"><svg class="ic up"><use href="#nleft"/></svg></button>
          <button class="act" aria-label="Obnovit"><svg class="ic"><use href="#refresh"/></svg></button>
        </div>
        <ul class="places">
          <li><i class="chev r"></i><svg class="ic s18"><use href="#star"/></svg>Oblíbené</li>
          <li><i class="chev r"></i><svg class="ic s18"><use href="#folder"/></svg>(C:)</li>
        </ul>
        <button class="sect"><i class="tri"></i>Hledat</button>
        <button class="sect open"><i class="tri down"></i>Seznam souborů</button>
        <div class="ftype">
          <button class="vw" aria-label="Zobrazení"><svg class="ic"><use href="#listv"/></svg><i class="dn"></i></button>
          <span class="sel"><select aria-label="Typ souborů"><option>All Support Files</option></select></span>
        </div>
        <div class="files"></div>
      </div>
      <nav class="side">
        <button class="on" aria-label="Soubory"><svg width="30" height="27"><use href="#rfolder"/></svg></button>
        <button aria-label="Knihovna"><svg class="ic s30"><use href="#rlib"/></svg></button>
        <button aria-label="Hladiny"><svg width="30" height="24"><use href="#rlayers"/></svg></button>
        <button aria-label="Vizuály"><svg width="30" height="27"><use href="#rballs"/></svg></button>
        <button aria-label="Materiály"><svg class="ic s30"><use href="#rmat"/></svg></button>
      </nav>
    </div>
  </aside>
</main>
</body>
</html>
```

FILE: styles.css
```css
* { box-sizing: border-box; }
html, body { height: 100%; }
body {
  margin: 0;
  display: flex;
  flex-direction: column;
  overflow: hidden;
  background: #e8eaec;
  color: #1f2326;
  font: 14px/20px "Noto Sans", sans-serif;
}
button, input, select { font: inherit; color: inherit; margin: 0; }
button { border: 0; padding: 0; background: none; white-space: nowrap; }
h1, h2, p, ul { margin: 0; padding: 0; font-size: 14px; font-weight: 400; list-style: none; }
svg { display: block; flex: none; }
.sprite { position: absolute; width: 0; height: 0; }
.ic { width: 20px; height: 20px; }
.s14 { width: 14px; height: 14px; }
.s16 { width: 16px; height: 16px; }
.s18 { width: 18px; height: 18px; }
.s30 { width: 30px; height: 30px; }
.dn, .dd::after, .tbdd::after, .vdd::after, .more::after {
  content: "";
  display: block;
  width: 0;
  border: 5px solid transparent;
  border-top-color: #1d1f21;
  border-bottom: 0;
}

/* title bar */
.titlebar { display: flex; align-items: center; height: 35px; flex: none; }
.quick { display: flex; align-items: center; width: 298px; flex: none; }
.quick button { width: 28px; display: flex; justify-content: center; }
.quick .app { margin-left: 2px; }
.vbar { width: 1px; height: 14px; background: #777; margin: 0 8px 0 3px; }
.quick .more { width: 18px; flex-direction: column; align-items: center; gap: 2px; }
.more::before { content: ""; width: 10px; height: 2px; background: #111; }
.quick .collapse::before {
  content: "";
  border: 7px solid transparent;
  border-right-color: #1c8fe0;
  border-left: 0;
}
.quick .collapse { width: 22px; }
.menu { display: flex; gap: 18px; padding: 0 6px; }
.caption { margin: 0 14% 0 auto; color: #92979b; white-space: nowrap; }
.winbtns { display: flex; gap: 14px; padding-right: 2px; align-items: center; }

/* ribbon tabs */
.tabs { display: flex; height: 27px; flex: none; border-bottom: 1px solid #b8bdc6; align-items: stretch; }
.file { width: 91px; background: #2a5db2; color: #fff; border: 1px solid #3f7fe0; margin-right: 4px; }
.tab { padding: 3px 11px 0 10px; }
.tab.on { background: #fcfcfd; border: 1px solid #b8bdc6; border-bottom: 0; padding: 3px 7px 0 9px; margin-bottom: -1px; }
.fold { padding: 0 6px 4px 6px; }
.tabtools { display: flex; align-items: center; gap: 6px; margin-left: auto; }
.find { display: flex; align-items: center; width: 182px; height: 24px; background: #fff; border: 1px solid #b2bac4; padding-right: 6px; margin-right: 6px; }
.find input { flex: 1; min-width: 0; border: 0; outline: 0; background: none; padding: 0 3px; }
.find input::placeholder, .filter input::placeholder { color: #8f9499; opacity: 1; }
.helpb { display: flex; align-items: center; gap: 6px; padding: 0 8px; }

/* ribbon */
.ribbon { display: flex; height: 116px; flex: none; background: #fcfcfd; border-bottom: 1px solid #b8bdc6; }
.group { position: relative; flex: none; padding: 5px 0 0 5px; background: linear-gradient(#d4d6da, #d4d6da) right 6px / 1px 100% no-repeat; }
.g1 { width: 291px; }
.group.g1 { padding-left: 9px; }
.g2 { width: 357px; }
.g3 { width: 443px; }
.g4 { width: 361px; }
.g5 { width: 280px; }
.g6 { width: 164px; }
.cols { display: grid; align-items: start; height: 84px; }
.g1 .cols { grid-template-columns: 94px 1fr; }
.g2 .cols { grid-template-columns: 112px 91px 1fr; }
.g3 .cols { grid-template-columns: 170px 132px 1fr; }
.g4 .cols { grid-template-columns: 172px 1fr; }
.g5 .cols { grid-template-columns: 171px 1fr; }
.group h2 { color: #7d8286; text-align: center; line-height: 26px; }
.col { display: flex; flex-direction: column; align-items: flex-start; }
.cmd { display: flex; height: 28px; border: 1px solid transparent; }
.cmd button { display: flex; align-items: center; gap: 4px; padding: 0 3px 0 2px; }
.cmd button.dd { padding: 0 5px; }
.framed { border-color: #f5dc94; }
.hot button:first-child { background: #fdf1cb; border-right: 1px solid #f5dc94; }
.soft { background: #fdf9ee; border-color: #fbf0d6; }
.marked { position: relative; }
.marked::after { content: ""; position: absolute; inset: -7px -6px -7px -9px; border: 5px solid #ee1c24; }
.launcher { position: absolute; right: 5px; bottom: 7px; }

/* selection toolbar */
.toolbar { display: flex; align-items: center; height: 35px; flex: none; padding: 3px 0 0 4px; }
.grip { width: 2px; height: 20px; margin-right: 6px; background: repeating-linear-gradient(#70767c 0 2px, transparent 2px 4px); }
.tb { width: 28px; height: 27px; display: flex; align-items: center; justify-content: center; flex: none; }
.lit { background: #fde293; border: 1px solid #d9a93c; width: 27px; }
.tbdd { width: 18px; padding-left: 3px; }
.sep { width: 1px; height: 26px; background: #b8bdc6; margin: 0 2px; }
.sel { display: grid; align-items: center; background: #fff; border: 1px solid #b2bac4; flex: none; height: 27px; }
.sel select {
  grid-area: 1 / 1;
  appearance: none;
  border: 0;
  background: none;
  padding: 0 18px 0 4px;
  width: 100%;
  min-width: 0;
  height: 100%;
  outline: 0;
}
.sel::after {
  content: "";
  grid-area: 1 / 1;
  justify-self: end;
  margin-right: 6px;
  border: 3px solid transparent;
  border-top: 4px solid #444;
  border-bottom: 0;
  pointer-events: none;
}
.toolbar .sel { width: 168px; }
.toolbar .sel + .lit { margin: 0 1px; }
.off { background: #eff0f1; border-color: #c6cad0; }
.sel.off select { color: #888c90; opacity: 1; }
.sel.off::after { border-top-color: #a2a6aa; }

/* work area */
.work { display: grid; grid-template-columns: 541px minmax(0, 1fr) 408px; flex: 1; min-height: 0; }
.left, .right, .center { display: flex; flex-direction: column; min-width: 0; min-height: 0; }
.ptitle { display: flex; align-items: center; gap: 8px; height: 26px; flex: none; padding: 2px 10px 0 5px; color: #43494e; }
.right .ptitle { padding-right: 2px; }
.ptitle h2 { margin-right: auto; }
.lbody, .rbody { display: flex; flex: 1; min-height: 0; }
.side { display: flex; flex-direction: column; flex: none; }
.side button { height: 60px; display: flex; align-items: center; justify-content: center; }
.side .on { background: #fcfcfd; border-bottom: 1px solid #b8bdc6; }
.left .side { width: 40px; }
.left .side .on { border: 1px solid #b8bdc6; border-right: 0; margin-left: 1px; }
.mgr { flex: 1; display: flex; flex-direction: column; border: 1px solid #b2bac4; border-width: 1px 2px 0; margin-right: 3px; background: #fff; min-width: 0; }
.filter { display: flex; height: 32px; flex: none; border: 1px solid #b2bac4; border-width: 1px 0; }
.filter .sel { width: 232px; height: 30px; border-width: 0 1px 0 0; }
.filter input { flex: 1; min-width: 0; border: 0; outline: 0; padding: 0 3px; border-right: 1px solid #b2bac4; background: #fff; }
.filter button { width: 28px; display: flex; align-items: center; justify-content: center; }
.stripes { flex: 1; min-height: 0; background: repeating-linear-gradient(#fff 0 23px, #f5f5f5 23px 46px) 0 30px; }
.tree { width: 100%; border-collapse: collapse; table-layout: fixed; }
.tree th { height: 30px; padding: 0 5px; background: #eff3f7; text-align: left; font-weight: 400; border-bottom: 1px solid #c5cad4; }
.tree th:first-child { width: 287px; }
.tree th:first-child, .tree td:first-child { border-right: 1px solid #c5cad4; }
.tree td { height: 23px; padding: 0; }
.tree tbody tr:nth-child(even) { background: #f5f5f5; }
.n { display: flex; align-items: center; height: 23px; gap: 5px; white-space: nowrap; }
.n b { font-weight: 400; color: #000; }
.l0 { padding-left: 2px; }
.l1 { padding-left: 20px; }
.l2 { padding-left: 58px; }
.l2 .ic { margin-left: 2px; }
.n input { appearance: none; width: 16px; height: 16px; margin: 0; border: 1px solid #000; background: #fff; display: grid; place-items: center; flex: none; }
.n input:checked::before {
  content: "";
  width: 12px;
  height: 12px;
  background: #12a012;
  clip-path: polygon(0 52%, 18% 44%, 38% 72%, 88% 0, 100% 6%, 42% 100%, 32% 100%);
}
.n input.red:checked::before { background: #f01818; }
.dim { color: #8d9195; }
.stop { color: #f01820; }
.stop .ic { margin-left: 0; }
.chev { width: 12px; height: 12px; margin: 0 3px 0 0; display: grid; place-items: center; flex: none; }
.chev::before { content: ""; width: 6px; height: 6px; border: solid #222; border-width: 0 3px 3px 0; transform: rotate(45deg) translate(-1px, -1px); }
.chev.r::before { border-color: #9a9da0; transform: rotate(-45deg); }

/* documents */
.docs { display: flex; height: 26px; flex: none; border-bottom: 1px solid #b8bdc6; overflow: hidden; }
.doc { display: flex; align-items: center; justify-content: flex-end; gap: 7px; padding-right: 19px; border: 1px solid transparent; border-bottom: 0; }
.doc .x { width: 13px; }
.d0 { width: 66px; }
.d1 { width: 188px; }
.d2 { width: 260px; }
.d3 { width: 174px; }
.d4 { width: 184px; }
.hover { border-color: #9db9e4; background: linear-gradient(#f1f1ee, #fbdf9f); }
.doc.on { background: #fcfcfd; border-color: #b8bdc6; }
.arrows { display: flex; align-items: center; justify-content: center; gap: 12px; width: 38px; background: #dfe3e7; }
.extra { width: 28px; display: flex; align-items: center; justify-content: center; }
.canvas { position: relative; flex: 1; min-height: 0; border: 1px solid #b8bdc6; border-width: 0 1px; background: linear-gradient(#fff, #f2f2f2 16%, #c8c8c8 66%, #acacac); overflow: hidden; }
.scene { width: 100%; height: 100%; }
.axis { font: 18px "Noto Sans", sans-serif; }
.overlay { position: absolute; inset: 0 0 auto 0; }
.vtools { display: flex; align-items: center; height: 30px; padding: 2px 0 0 110px; }
.vdd { width: 20px; }
.sw { width: 20px; height: 10px; background: #000; border: 1px solid #444; }
.sw.blue { height: 19px; background: #bfe6f5; border-color: #111; }
.layer { display: flex; align-items: center; gap: 3px; height: 26px; width: 144px; padding-left: 9px; background: #fff; border: 1px solid #b2bac4; }
.layer .sel { border: 0; height: 24px; flex: 1; min-width: 0; margin-left: 6px; }
.overlay p { padding-left: 20px; color: #111; }

/* file browser */
.right .side { width: 34px; overflow: hidden; }
.right .side button { justify-content: flex-start; padding-left: 4px; }
.browser { flex: 1; min-width: 0; display: flex; flex-direction: column; margin-left: 1px; padding: 1px; border: 1px solid #b2bac4; border-width: 1px 2px 0 1px; background: #e2e5e8; }
.navb { display: flex; gap: 4px; height: 34px; padding-bottom: 3px; flex: none; }
.navb button { width: 35px; display: flex; align-items: center; justify-content: center; border: 1px solid #c9cdd2; background: #eff0f1; }
.navb .act { background: #fff; border-color: #b2bac4; }
.flip { transform: rotate(180deg); }
.up { transform: rotate(90deg); }
.places { height: 223px; flex: none; margin-bottom: 8px; border: 1px solid #b2bac4; background: repeating-linear-gradient(#fff 0 23px, #f5f5f5 23px 46px); }
.places li { display: flex; align-items: center; height: 23px; gap: 5px; padding-left: 0; }
.places .chev { margin-right: 5px; }
.sect { display: flex; align-items: center; gap: 8px; height: 30px; flex: none; margin-bottom: 2px; padding-left: 5px; border: 1px solid #b2bac4; background: #fcfcfd; font-weight: 700; }
.sect.open { margin-bottom: 0; }
.tri { border: 6px solid transparent; border-left: 9px solid #555b62; border-right: 0; }
.tri.down { border: 5px solid transparent; border-top: 10px solid #555b62; border-bottom: 0; }
.ftype { display: flex; gap: 3px; height: 38px; flex: none; padding: 3px; border: 1px solid #b2bac4; border-top: 0; background: #dfe4ea; }
.vw { display: flex; align-items: center; justify-content: space-between; width: 53px; padding: 0 5px; background: #fff; border: 1px solid #b2bac4; }
.ftype .sel { flex: 1; height: 31px; }
.files { flex: 1; background: #fff; border: 1px solid #b2bac4; border-width: 0 1px; }
```
